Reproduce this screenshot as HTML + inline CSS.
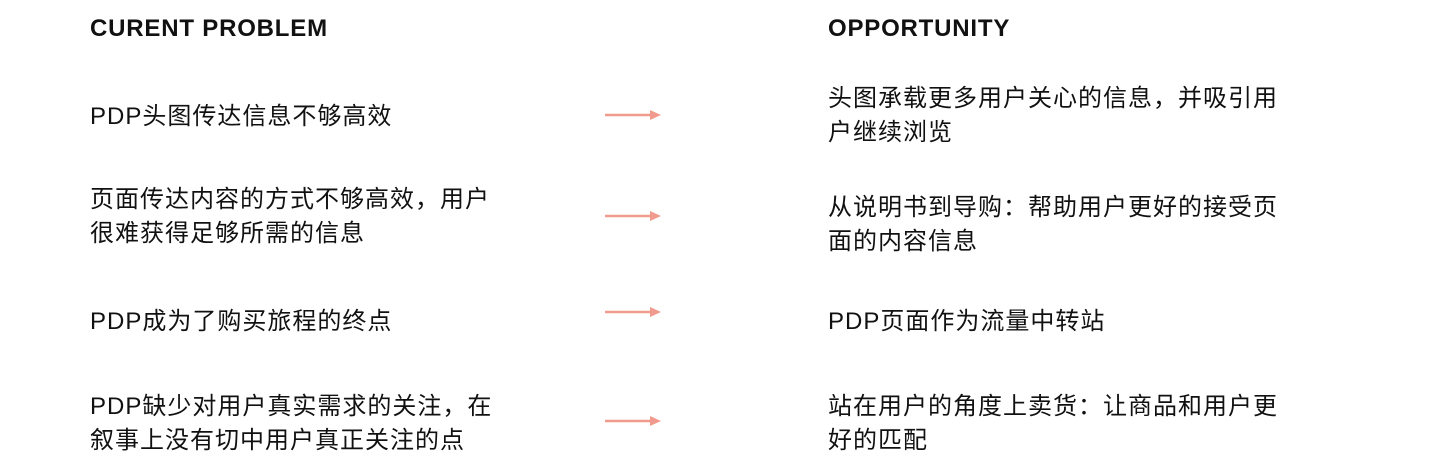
<!DOCTYPE html>
<html><head><meta charset="utf-8"><style>
body{margin:0;width:1440px;height:469px;background:#fff;position:relative;overflow:hidden;font-family:"Liberation Sans","Noto Sans CJK SC",sans-serif;color:#111}
.h{position:absolute;top:15px;font-weight:bold;font-size:24px;letter-spacing:0.8px}
.t{position:absolute;font-size:24px;line-height:34px;letter-spacing:1px;white-space:nowrap}
.a{position:absolute;left:605px;width:56px;height:12px}
</style></head><body>
<div class="h" style="left:90px">CURENT PROBLEM</div>
<div class="h" style="left:828px">OPPORTUNITY</div>

<div class="t" style="left:90px;top:100px">PDP头图传达信息不够高效</div>
<div class="t" style="left:828px;top:82px">头图承载更多用户关心的信息，并吸引用<br>户继续浏览</div>

<div class="t" style="left:90px;top:183px">页面传达内容的方式不够高效，用户<br>很难获得足够所需的信息</div>
<div class="t" style="left:828px;top:191px">从说明书到导购：帮助用户更好的接受页<br>面的内容信息</div>

<div class="t" style="left:90px;top:305px">PDP成为了购买旅程的终点</div>
<div class="t" style="left:828px;top:305px">PDP页面作为流量中转站</div>

<div class="t" style="left:90px;top:390px">PDP缺少对用户真实需求的关注，在<br>叙事上没有切中用户真正关注的点</div>
<div class="t" style="left:828px;top:390px">站在用户的角度上卖货：让商品和用户更<br>好的匹配</div>

<svg class="a" style="top:109px" viewBox="0 0 56 12"><path d="M0 6H46" stroke="#f19a8e" stroke-width="2.5"/><path d="M45 1L56 6L45 11Z" fill="#f19a8e"/></svg>
<svg class="a" style="top:210px" viewBox="0 0 56 12"><path d="M0 6H46" stroke="#f19a8e" stroke-width="2.5"/><path d="M45 1L56 6L45 11Z" fill="#f19a8e"/></svg>
<svg class="a" style="top:306px" viewBox="0 0 56 12"><path d="M0 6H46" stroke="#f19a8e" stroke-width="2.5"/><path d="M45 1L56 6L45 11Z" fill="#f19a8e"/></svg>
<svg class="a" style="top:415px" viewBox="0 0 56 12"><path d="M0 6H46" stroke="#f19a8e" stroke-width="2.5"/><path d="M45 1L56 6L45 11Z" fill="#f19a8e"/></svg>
</body></html>
